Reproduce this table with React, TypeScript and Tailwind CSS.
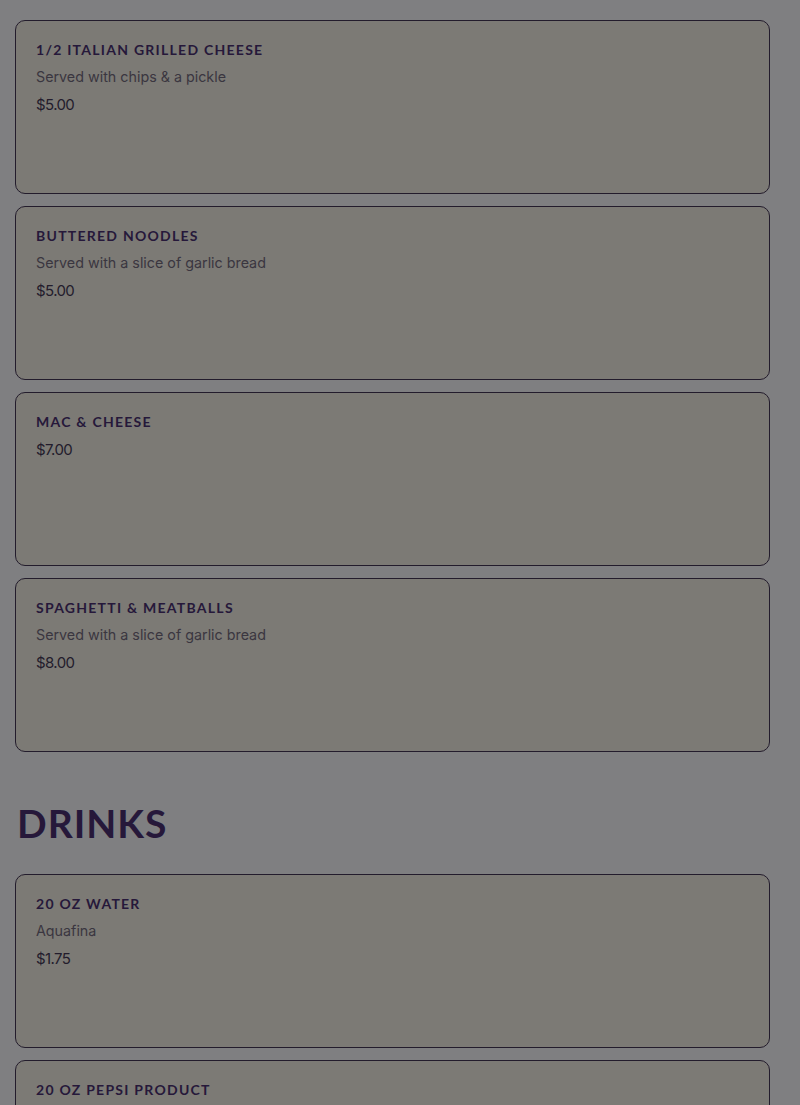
import React from "react";

type Item = { name: string; desc?: string; price: string };

const food: Item[] = [
  { name: "1/2 Italian Grilled Cheese", desc: "Served with chips & a pickle", price: "$5.00" },
  { name: "Buttered Noodles", desc: "Served with a slice of garlic bread", price: "$5.00" },
  { name: "Mac & Cheese", price: "$7.00" },
  { name: "Spaghetti & Meatballs", desc: "Served with a slice of garlic bread", price: "$8.00" },
];

const drinks: Item[] = [
  { name: "20 oz Water", desc: "Aquafina", price: "$1.75" },
  { name: "20 oz Pepsi Product", price: "$2.00" },
];

function Card({ item }: { item: Item }) {
  return (
    <div className="h-[174px] shrink-0 rounded-[10px] border border-[#231c2c] bg-[#7c7a75] px-5 pt-[20px]">
      <div className="text-[14px] font-bold uppercase leading-[18px] tracking-[0.09em] text-[#26183a] [font-family:Lato,sans-serif]">
        {item.name}
      </div>
      {item.desc && (
        <div className="mt-[9px] text-[14.3px] leading-[18px] text-[#3a3640] [font-family:Inter,sans-serif]">
          {item.desc}
        </div>
      )}
      <div className="mt-[10px] text-[15px] leading-[18px] tracking-[-0.04em] text-[#231c2c] [font-family:Inter,sans-serif]">
        {item.price}
      </div>
    </div>
  );
}

export default function App() {
  return (
    <div className="h-[1105px] overflow-hidden bg-[#7f7f81] pl-[15px] pr-[30px] pt-5">
      <div className="flex flex-col gap-3">
        {food.map((it) => (
          <Card key={it.name} item={it} />
        ))}
      </div>
      <h2 className="mt-[47px] mb-[27px] pl-[2px] text-[39px] font-bold uppercase leading-[48px] tracking-[0.025em] text-[#26183a] [font-family:Lato,sans-serif]">
        Drinks
      </h2>
      <div className="flex flex-col gap-3">
        {drinks.map((it) => (
          <Card key={it.name} item={it} />
        ))}
      </div>
    </div>
  );
}
